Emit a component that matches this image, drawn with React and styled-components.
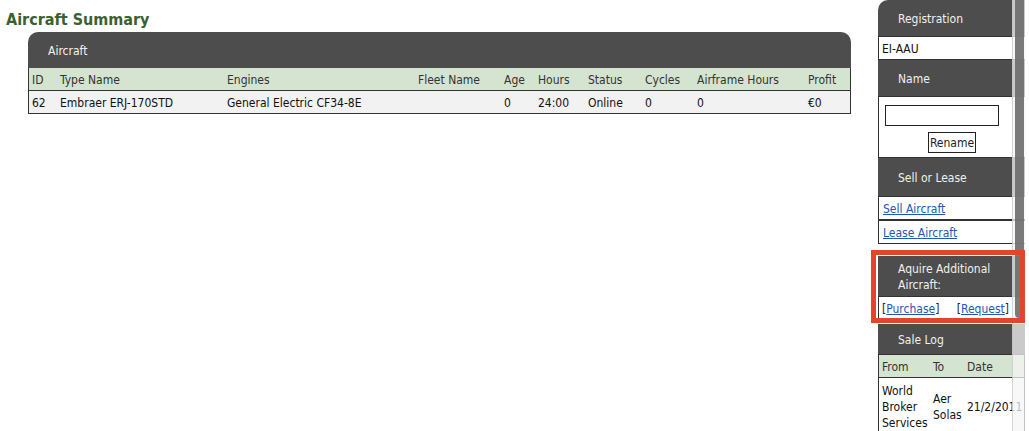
import React from "react";
import styled, { createGlobalStyle } from "styled-components";

const GlobalStyle = createGlobalStyle`
  html, body {
    margin: 0;
    padding: 0;
    background: #fff;
    overflow: hidden;
  }
  body {
    font-family: "DejaVu Sans Condensed", "DejaVu Sans", sans-serif;
    font-stretch: condensed;
    font-size: 12px;
    color: #111;
  }
`;

const AIRCRAFT_COLS = "27px 167px 191px 86px 34px 50px 57px 52px 111px 46px";
const SALE_COLS = "50px 34px 1fr";

const aircraftHead = ["ID", "Type Name", "Engines", "Fleet Name", "Age", "Hours", "Status", "Cycles", "Airframe Hours", "Profit"];
const aircraftRows = [
  ["62", "Embraer ERJ-170STD", "General Electric CF34-8E", "", "0", "24:00", "Online", "0", "0", "€0"],
];

const Page = styled.div`
  display: flex;
  align-items: flex-start;
  width: 1029px;
  height: 431px;
`;

const Main = styled.main`
  flex: none;
  width: 878px;
`;

const Title = styled.h1`
  margin: 0;
  padding: 10px 0 0 6px;
  height: 22px;
  font-size: 16px;
  line-height: 20px;
  font-weight: bold;
  color: #3a6130;
`;

const Panel = styled.section`
  margin-left: 28px;
  width: 823px;
`;

const PanelHeader = styled.div`
  display: flex;
  align-items: center;
  height: 34px;
  padding: 2px 0 0 20px;
  background: #4d4d4d;
  color: #f2f2f2;
  border-radius: 10px 10px 0 0;
`;

const GridRow = styled.div`
  display: grid;
  grid-template-columns: ${(p) => p.$cols};
  align-items: ${(p) => (p.$middle ? "center" : "stretch")};
  min-height: 22px;
  padding: ${(p) => (p.$pad ? "3px 0" : "0")};
  background: ${(p) => (p.$head ? "#d5e3d1" : p.$bg || "#fff")};
  border-left: 1px solid #333;
  border-right: 1px solid #333;
  border-bottom: 1px solid #333;
  color: ${(p) => (p.$head ? "#333" : "#111")};
`;

const Cell = styled.div`
  display: flex;
  align-items: center;
  padding: 2px 1px 0 4px;
  line-height: 16px;
  white-space: ${(p) => (p.$wrap ? "normal" : "nowrap")};
  overflow: hidden;

  &:first-child {
    padding-left: 3px;
  }
`;

const Sidebar = styled.aside`
  position: relative;
  flex: none;
  width: 147px;
  height: 431px;
`;

const SideHeader = styled.div`
  display: flex;
  align-items: center;
  min-height: ${(p) => p.$h || 37}px;
  padding: 5px 20px 3px;
  box-sizing: border-box;
  background: #4d4d4d;
  color: #f0f0f0;
  line-height: 16px;
  border-bottom: 1px solid #333;
  border-top-left-radius: ${(p) => (p.$first ? "10px" : "0")};
`;

const SideRow = styled.div`
  display: flex;
  align-items: center;
  justify-content: ${(p) => p.$justify || "flex-start"};
  height: 20px;
  padding: 2px 16px 0 ${(p) => p.$pad || 3}px;
  background: #fff;
  border-left: 1px solid #333;
  border-bottom: ${(p) => (p.$thick ? 2 : 1)}px solid #333;
`;

const RenameForm = styled.form`
  display: flex;
  flex-direction: column;
  align-items: flex-start;
  height: 61px;
  box-sizing: border-box;
  padding: 8px 0 0 6px;
  gap: 6px;
  background: #fff;
  border-left: 1px solid #333;
  border-bottom: 1px solid #333;
`;

const NameInput = styled.input`
  width: 114px;
  height: 21px;
  box-sizing: border-box;
  margin: 0;
  border: 1px solid #222;
  background: #fff;
  font: inherit;
`;

const RenameButton = styled.button`
  height: 21px;
  width: 48px;
  margin-left: 43px;
  padding: 1px 0 0;
  box-sizing: border-box;
  border: 1px solid #222;
  background: #fff;
  color: #222;
  font-family: inherit;
  font-stretch: condensed;
  font-size: 12px;
`;

const Link = styled.a`
  color: #2356b8;
  text-decoration: underline;
  cursor: pointer;
`;

const Bracket = styled.span`
  color: #222;
`;

const AquireBlock = styled.div`
  position: relative;
  margin-top: 12px;
`;

const Highlight = styled.div`
  position: absolute;
  left: -7px;
  top: -6px;
  width: 154px;
  height: 73px;
  box-sizing: border-box;
  border: 5px solid #e4432d;
  z-index: 3;
  pointer-events: none;
`;

const SaleLog = styled.div`
  margin-top: 4px;
`;

const Scrollbar = styled.div`
  position: absolute;
  top: 0;
  right: 0;
  width: 12px;
  height: 431px;
  background: rgba(245, 245, 245, 0.74);
  border-left: 1px solid rgba(190, 190, 190, 0.6);
  z-index: 2;
`;

const Thumb = styled.div`
  margin-left: 2px;
  width: 9px;
  height: 318px;
  background: rgba(108, 108, 108, 0.9);
  border-radius: 0 0 4px 4px;
`;

const App = () => {
  return (
    <>
      <GlobalStyle />
      <Page>
        <Main>
          <Title>Aircraft Summary</Title>
          <Panel>
            <PanelHeader>Aircraft</PanelHeader>
            <GridRow $cols={AIRCRAFT_COLS} $head>
              {aircraftHead.map((h) => (
                <Cell key={h}>{h}</Cell>
              ))}
            </GridRow>
            {aircraftRows.map((row) => (
              <GridRow key={row[0]} $cols={AIRCRAFT_COLS} $bg="#f2f2f2">
                {row.map((c, i) => (
                  <Cell key={i}>{c}</Cell>
                ))}
              </GridRow>
            ))}
          </Panel>
        </Main>

        <Sidebar>
          <SideHeader $first>Registration</SideHeader>
          <SideRow>EI-AAU</SideRow>
          <SideHeader>Name</SideHeader>
          <RenameForm onSubmit={(e) => e.preventDefault()}>
            <NameInput type="text" />
            <RenameButton type="submit">Rename</RenameButton>
          </RenameForm>
          <SideHeader $h={39}>Sell or Lease</SideHeader>
          <SideRow $pad={4} $thick>
            <Link>Sell Aircraft</Link>
          </SideRow>
          <SideRow $pad={4}>
            <Link>Lease Aircraft</Link>
          </SideRow>

          <AquireBlock>
            <SideHeader>Aquire Additional Aircraft:</SideHeader>
            <SideRow $justify="space-between">
              <span>
                <Bracket>[</Bracket>
                <Link>Purchase</Link>
                <Bracket>]</Bracket>
              </span>
              <span>
                <Bracket>[</Bracket>
                <Link>Request</Link>
                <Bracket>]</Bracket>
              </span>
            </SideRow>
            <Highlight />
          </AquireBlock>

          <SaleLog>
            <SideHeader $h={31}>Sale Log</SideHeader>
            <GridRow $cols={SALE_COLS} $head $middle>
              <Cell>From</Cell>
              <Cell>To</Cell>
              <Cell>Date</Cell>
            </GridRow>
            <GridRow $cols={SALE_COLS} $middle $pad>
              <Cell $wrap>World Broker Services</Cell>
              <Cell $wrap>Aer Solas</Cell>
              <Cell>21/2/2011</Cell>
            </GridRow>
          </SaleLog>

          <Scrollbar>
            <Thumb />
          </Scrollbar>
        </Sidebar>
      </Page>
    </>
  );
};

export default App;
